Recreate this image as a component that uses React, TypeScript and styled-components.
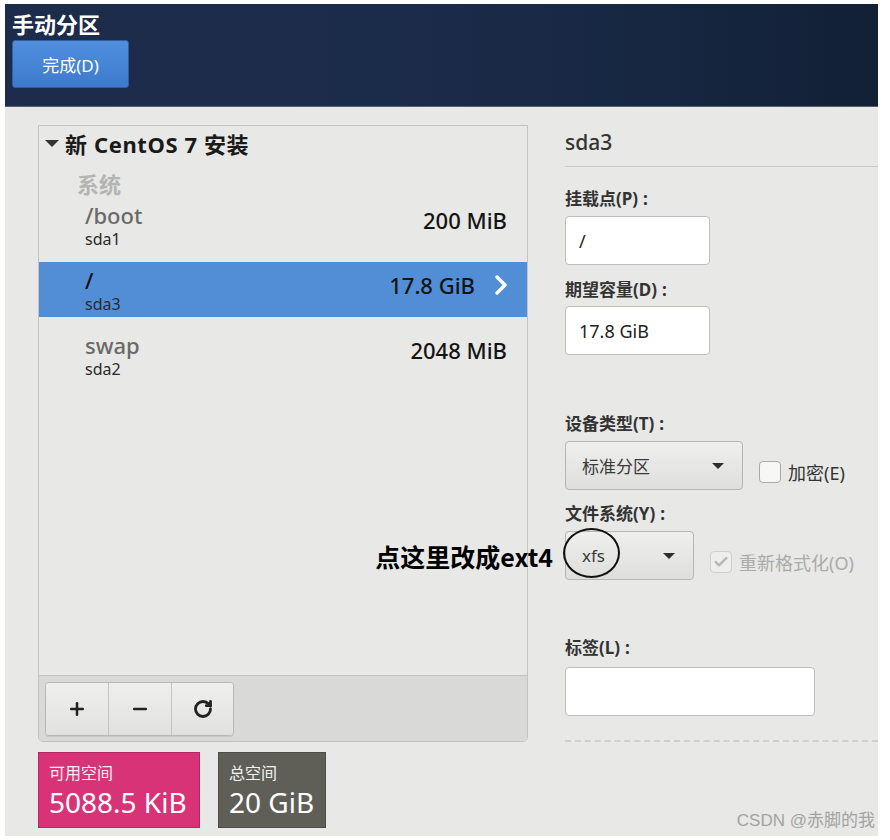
import styled, { createGlobalStyle } from 'styled-components';
import { Plus, Minus, RotateCw, Check } from 'lucide-react';

const colors = {
  page: '#e8e8e6',
  border: '#c3c3c1',
  selected: '#528ed6',
  pink: '#d93378',
  slate: '#5f5f58',
};

const GlobalStyle = createGlobalStyle`
  body {
    margin: 0;
    background: #ffffff;
    font-family: "Noto Sans", "Noto Sans CJK SC", sans-serif;
  }
`;

const Screen = styled.div`
  position: relative;
  width: 873px;
  height: 832px;
  margin: 4px 0 0 5px;
  background: ${colors.page};
  overflow: hidden;
`;

const Header = styled.header`
  height: 103px;
  box-sizing: border-box;
  padding: 6px 7px 0;
  background: linear-gradient(90deg, #1d2c4b 0%, #1b2b4a 45%, #172843 70%, #122036 100%);
  border-bottom: 1px solid #56606e;
`;

const Title = styled.div`
  height: 28px;
  line-height: 28px;
  font-size: 22px;
  font-weight: 700;
  color: #ffffff;
`;

const DoneButton = styled.button`
  margin-top: 2px;
  width: 117px;
  height: 48px;
  border: 1px solid #2f5f9e;
  border-radius: 3px;
  background: linear-gradient(180deg, #4f8fde 0%, #3e7acb 100%);
  color: #ffffff;
  font-family: inherit;
  font-size: 17px;
`;

const Body = styled.div`
  display: flex;
  gap: 37px;
  padding-left: 33px;
`;

const LeftColumn = styled.div`
  width: 490px;
  padding-top: 18px;
`;

const ListPanel = styled.div`
  height: 617px;
  box-sizing: border-box;
  border: 1px solid ${colors.border};
  border-radius: 0 0 5px 5px;
  display: flex;
  flex-direction: column;
  overflow: hidden;
`;

const Tree = styled.div`
  flex: 1;
`;

const TreeHeader = styled.div`
  height: 34px;
  display: flex;
  align-items: center;
  gap: 6px;
  padding-left: 6px;
  font-size: 22px;
  font-weight: 700;
  letter-spacing: 0.6px;
  color: #1a1a1a;
`;

const Caret = styled.span`
  width: 0;
  height: 0;
  border-left: 7px solid transparent;
  border-right: 7px solid transparent;
  border-top: 7px solid #333;
`;

const Category = styled.div`
  height: 26px;
  line-height: 26px;
  margin-top: 11px;
  padding-left: 38px;
  font-size: 22px;
  font-weight: 700;
  color: #b4b4b2;
`;

const Rows = styled.div`
  display: flex;
  flex-direction: column;
  gap: 10px;
`;

const Row = styled.div<{ $selected?: boolean }>`
  height: 55px;
  box-sizing: border-box;
  padding: 5px 20px 0 46px;
  display: flex;
  justify-content: space-between;
  align-items: flex-start;
  background: ${p => (p.$selected ? colors.selected : 'transparent')};
`;

const MountName = styled.div<{ $selected?: boolean }>`
  height: 26px;
  line-height: 26px;
  font-size: 22px;
  font-weight: 500;
  color: ${p => (p.$selected ? '#111' : '#6a6a68')};
`;

const Device = styled.div`
  line-height: 22px;
  font-size: 16px;
  color: #2a2a2a;
`;

const SizeBox = styled.div`
  display: flex;
  align-items: center;
  gap: 20px;
  padding-top: 1px;
  height: 34px;
  font-size: 22px;
  font-weight: 500;
  color: #141414;
`;

const Toolbar = styled.div`
  height: 66px;
  box-sizing: border-box;
  border-top: 1px solid ${colors.border};
  background: #d9d9d7;
  padding: 6px 0 0 6px;
`;

const ButtonGroup = styled.div`
  display: inline-flex;
  border: 1px solid #b7b7b5;
  border-radius: 4px;
  overflow: hidden;
  box-shadow: 0 1px 0 rgba(0, 0, 0, 0.08);
`;

const ToolButton = styled.button<{ $w: number }>`
  width: ${p => p.$w}px;
  height: 52px;
  border: none;
  border-right: 1px solid #c4c4c2;
  background: linear-gradient(180deg, #efefee 0%, #e1e1df 100%);
  display: flex;
  align-items: center;
  justify-content: center;
  color: #222;
  padding: 0;

  &:last-child {
    border-right: none;
  }
`;

const SpaceRow = styled.div`
  display: flex;
  gap: 18px;
  margin-top: 10px;
`;

const SpaceCard = styled.div<{ $bg: string; $w: number }>`
  width: ${p => p.$w}px;
  height: 76px;
  box-sizing: border-box;
  padding: 10px 0 0 10px;
  background: ${p => p.$bg};
  border: 1px solid rgba(0, 0, 0, 0.18);
  color: #ffffff;
`;

const SpaceLabel = styled.div`
  font-size: 16px;
  line-height: 20px;
  opacity: 0.92;
`;

const SpaceValue = styled.div`
  margin-top: 3px;
  font-size: 28px;
  line-height: 32px;
  white-space: nowrap;
`;

const RightColumn = styled.div`
  flex: 1;
`;

const DetailHeader = styled.div`
  padding: 23px 0 12px;
  border-bottom: 1px solid #cacac8;
  font-size: 21px;
  font-weight: 500;
  line-height: 24px;
  color: #333;
`;

const FieldLabel = styled.div<{ $gap: number }>`
  margin-top: ${p => p.$gap}px;
  height: 22px;
  line-height: 22px;
  font-size: 17px;
  font-weight: 700;
  color: #333;
`;

const Colon = styled.span`
  margin-left: 5px;
`;

const TextInput = styled.div<{ $w: number; $gap: number }>`
  margin-top: ${p => p.$gap}px;
  width: ${p => p.$w}px;
  height: 49px;
  box-sizing: border-box;
  padding-left: 13px;
  display: flex;
  align-items: center;
  background: #ffffff;
  border: 1px solid #bdbdbb;
  border-radius: 4px;
  font-size: 18px;
  color: #222;
`;

const ComboRow = styled.div<{ $gap: number }>`
  position: relative;
  margin-top: ${p => p.$gap}px;
  display: flex;
  align-items: center;
  gap: 16px;
`;

const Combo = styled.div<{ $w: number }>`
  width: ${p => p.$w}px;
  height: 49px;
  box-sizing: border-box;
  padding: 0 18px 0 16px;
  display: flex;
  align-items: center;
  justify-content: space-between;
  background: linear-gradient(180deg, #efefee 0%, #dededc 100%);
  border: 1px solid #b5b5b3;
  border-radius: 4px;
  font-size: 17px;
  color: #3a3a3a;
`;

const DropArrow = styled.span`
  width: 0;
  height: 0;
  border-left: 6px solid transparent;
  border-right: 6px solid transparent;
  border-top: 6px solid #2e2e2e;
`;

const CheckWrap = styled.div<{ $disabled?: boolean }>`
  display: flex;
  align-items: center;
  gap: 7px;
  margin-top: 12px;
  font-size: 18px;
  color: ${p => (p.$disabled ? '#ababa9' : '#333')};
`;

const CheckBox = styled.span<{ $disabled?: boolean }>`
  width: 22px;
  height: 22px;
  box-sizing: border-box;
  border: 1px solid ${p => (p.$disabled ? '#cfcfcd' : '#a9a9a7')};
  border-radius: 4px;
  background: ${p => (p.$disabled ? '#eeeeec' : '#f7f7f6')};
  display: flex;
  align-items: center;
  justify-content: center;
  color: #b5b5b3;
`;

const Note = styled.div`
  position: absolute;
  right: calc(100% + 12px);
  top: 50%;
  transform: translateY(-50%);
  white-space: nowrap;
  font-family: "Noto Sans CJK SC", "Noto Sans", sans-serif;
  font-size: 25px;
  font-weight: 700;
  color: #000;
`;

const Ring = styled.span`
  position: absolute;
  left: -2px;
  top: -3px;
  width: 57px;
  height: 50px;
  box-sizing: border-box;
  border: 2.5px solid #111;
  border-radius: 50%;
  pointer-events: none;
`;

const Dashed = styled.div`
  margin-top: 24px;
  border-top: 2px dashed #cfcfcd;
`;

const Watermark = styled.div`
  position: absolute;
  right: 3px;
  bottom: 5px;
  font-family: "Liberation Sans", "Noto Sans CJK SC", sans-serif;
  font-size: 17px;
  color: #a3a3a1;
`;

const Chevron = () => (
  <svg width="12" height="20" viewBox="0 0 12 20">
    <polyline points="2,2 10,10 2,18" fill="none" stroke="#fff" strokeWidth="3.4" strokeLinecap="round" strokeLinejoin="round" />
  </svg>
);

const partitions = [
  { mount: '/boot', device: 'sda1', size: '200 MiB' },
  { mount: '/', device: 'sda3', size: '17.8 GiB', selected: true },
  { mount: 'swap', device: 'sda2', size: '2048 MiB' },
];

export default function App() {
  return (
    <>
      <GlobalStyle />
      <Screen>
        <Header>
          <Title>手动分区</Title>
          <DoneButton>完成(D)</DoneButton>
        </Header>

        <Body>
          <LeftColumn>
            <ListPanel>
              <Tree>
                <TreeHeader>
                  <Caret />
                  新 CentOS 7 安装
                </TreeHeader>
                <Category>系统</Category>
                <Rows>
                  {partitions.map(p => (
                    <Row key={p.device} $selected={p.selected}>
                      <div>
                        <MountName $selected={p.selected}>{p.mount}</MountName>
                        <Device>{p.device}</Device>
                      </div>
                      <SizeBox>
                        {p.size}
                        {p.selected && <Chevron />}
                      </SizeBox>
                    </Row>
                  ))}
                </Rows>
              </Tree>
              <Toolbar>
                <ButtonGroup>
                  <ToolButton $w={63}>
                    <Plus size={20} strokeWidth={3} />
                  </ToolButton>
                  <ToolButton $w={63}>
                    <Minus size={20} strokeWidth={3} />
                  </ToolButton>
                  <ToolButton $w={61}>
                    <RotateCw size={20} strokeWidth={3.4} />
                  </ToolButton>
                </ButtonGroup>
              </Toolbar>
            </ListPanel>

            <SpaceRow>
              <SpaceCard $bg={colors.pink} $w={162}>
                <SpaceLabel>可用空间</SpaceLabel>
                <SpaceValue>5088.5 KiB</SpaceValue>
              </SpaceCard>
              <SpaceCard $bg={colors.slate} $w={108}>
                <SpaceLabel>总空间</SpaceLabel>
                <SpaceValue>20 GiB</SpaceValue>
              </SpaceCard>
            </SpaceRow>
          </LeftColumn>

          <RightColumn>
            <DetailHeader>sda3</DetailHeader>

            <FieldLabel $gap={21}>挂载点(P)<Colon>:</Colon></FieldLabel>
            <TextInput $w={145} $gap={6}>/</TextInput>

            <FieldLabel $gap={14}>期望容量(D)<Colon>:</Colon></FieldLabel>
            <TextInput $w={145} $gap={5}>17.8 GiB</TextInput>

            <FieldLabel $gap={58}>设备类型(T)<Colon>:</Colon></FieldLabel>
            <ComboRow $gap={6}>
              <Combo $w={178}>
                标准分区
                <DropArrow />
              </Combo>
              <CheckWrap>
                <CheckBox />
                加密(E)
              </CheckWrap>
            </ComboRow>

            <FieldLabel $gap={13}>文件系统(Y)<Colon>:</Colon></FieldLabel>
            <ComboRow $gap={6}>
              <Note>点这里改成ext4</Note>
              <Combo $w={129}>
                xfs
                <DropArrow />
              </Combo>
              <Ring />
              <CheckWrap $disabled>
                <CheckBox $disabled>
                  <Check size={16} strokeWidth={3.5} />
                </CheckBox>
                重新格式化(O)
              </CheckWrap>
            </ComboRow>

            <FieldLabel $gap={57}>标签(L)<Colon>:</Colon></FieldLabel>
            <TextInput $w={250} $gap={8} />

            <Dashed />
          </RightColumn>
        </Body>

        <Watermark>CSDN @赤脚的我</Watermark>
      </Screen>
    </>
  );
}
